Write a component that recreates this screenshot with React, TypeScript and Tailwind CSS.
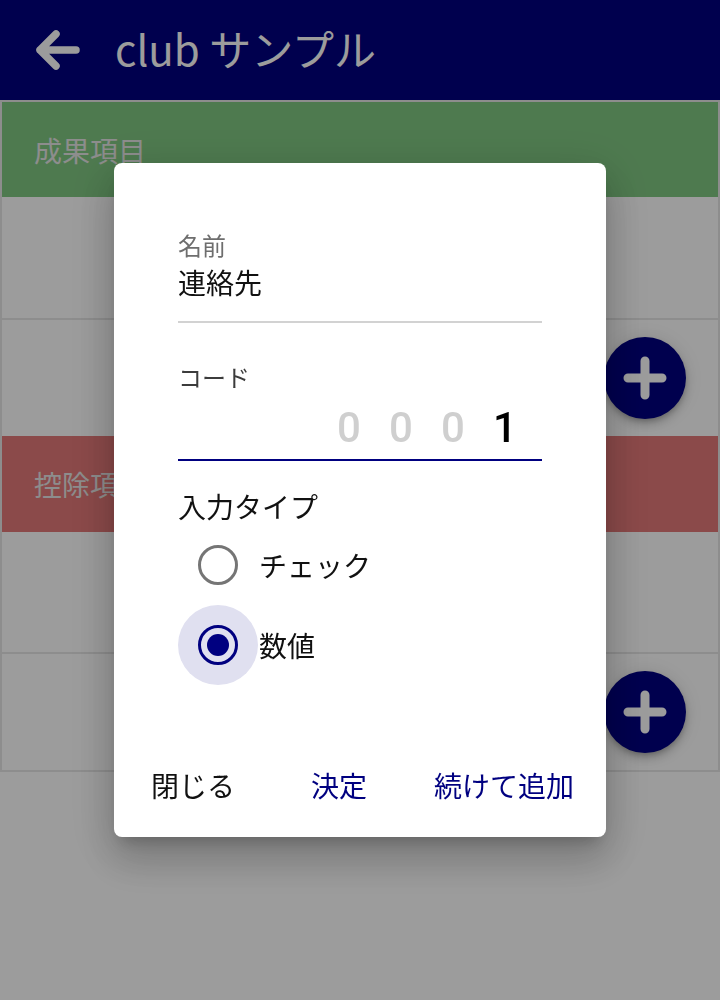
const Fab = () => (
  <div className="w-[82px] h-[82px] rounded-full bg-[#000080] shadow-[0_3px_5px_-1px_rgba(0,0,0,0.2),0_6px_10px_0_rgba(0,0,0,0.14),0_1px_18px_0_rgba(0,0,0,0.12)] flex items-center justify-center">
    <svg width="48" height="48" viewBox="0 0 48 48">
      <path d="M7 24H41M24 7V41" stroke="white" strokeWidth="9" strokeLinecap="round" fill="none" />
    </svg>
  </div>
);

function Radio({ checked, label }: { checked: boolean; label: string }) {
  return (
    <div className="h-[80px] flex items-center">
      <div
        className={`w-[80px] h-[80px] rounded-full flex items-center justify-center ${
          checked ? 'bg-[#e0e0f0]' : ''
        }`}
      >
        <div
          className={`w-[40px] h-[40px] rounded-full border-[3px] flex items-center justify-center ${
            checked ? 'border-[#000080]' : 'border-[#757575]'
          }`}
        >
          {checked && <div className="w-[22px] h-[22px] rounded-full bg-[#000080]"></div>}
        </div>
      </div>
      <span className="ml-px text-[28px] leading-[32px] text-[#111]">{label}</span>
    </div>
  );
}

export default function App() {
  return (
    <div className="relative min-h-[1000px] bg-white font-['Noto_Sans_CJK_JP',sans-serif]">
      {/* Header */}
      <header className="h-[100px] bg-[#000080] flex items-center">
        <svg className="ml-[32px]" width="48" height="48" viewBox="0 0 48 48">
          <path
            d="M44 24H8M24 8L8 24L24 40"
            stroke="white"
            strokeWidth="7.5"
            strokeLinecap="round"
            strokeLinejoin="round"
            fill="none"
          />
        </svg>
        <span className="ml-[35px] pb-[4px] text-[42px] leading-[60px] text-white">club サンプル</span>
      </header>

      {/* リスト */}
      <div className="border-2 border-[#e6e6e6]">
        <div className="h-[95px] bg-[#80c882] flex items-center pl-[32px]">
          <span className="text-[28px] leading-[32px] text-[#e6e6e6]">成果項目</span>
        </div>
        <div className="h-[123px] border-b-2 border-[#e6e6e6]"></div>
        <div className="h-[116px] flex items-center justify-end pr-[32px]">
          <Fab />
        </div>

        <div className="h-[96px] bg-[#e47979] flex items-center pl-[32px]">
          <span className="text-[28px] leading-[32px] text-[#e6e6e6]">控除項目</span>
        </div>
        <div className="h-[122px] border-b-2 border-[#e6e6e6]"></div>
        <div className="h-[116px] flex items-center justify-end pr-[32px]">
          <Fab />
        </div>
      </div>

      {/* ダイアログ */}
      <div className="fixed inset-0 bg-black/[0.39] flex items-center justify-center">
        <div className="w-[492px] h-[674px] bg-white rounded-lg shadow-[0_11px_15px_-7px_rgba(0,0,0,0.2),0_24px_38px_3px_rgba(0,0,0,0.14),0_9px_46px_8px_rgba(0,0,0,0.12)] pt-[66px]">
          <div className="px-[64px]">
            <div className="border-b-2 border-[#d2d2d2] pb-[23px]">
              <div className="text-[24px] leading-[32px] text-[#6e6e6e]">名前</div>
              <div className="mt-[5px] text-[28px] leading-[32px] text-[#111]">連絡先</div>
            </div>

            <div className="mt-[38px] border-b-2 border-[#000080] pb-[7px]">
              <div className="text-[24px] leading-[32px] text-[#3c3c3c]">コード</div>
              <div className="mt-[11px] h-[48px] flex justify-end pr-[11px] font-['Roboto',sans-serif] font-medium text-[42px] leading-[48px]">
                <span className="w-[52px] text-center text-[#cfcfcf]">0</span>
                <span className="w-[52px] text-center text-[#cfcfcf]">0</span>
                <span className="w-[52px] text-center text-[#cfcfcf]">0</span>
                <span className="w-[52px] text-center text-black">1</span>
              </div>
            </div>

            <div className="mt-[29px] text-[28px] leading-[32px] text-[#111]">入力タイプ</div>
            <div className="mt-[3px]">
              <Radio checked={false} label="チェック" />
              <Radio checked={true} label="数値" />
            </div>
          </div>

          <div className="mt-[84px] flex pl-[37px] text-[28px] leading-[32px]">
            <button className="text-[#111]">閉じる</button>
            <button className="ml-[76px] text-[#000080]">決定</button>
            <button className="ml-[67px] text-[#000080]">続けて追加</button>
          </div>
        </div>
      </div>
    </div>
  );
}
